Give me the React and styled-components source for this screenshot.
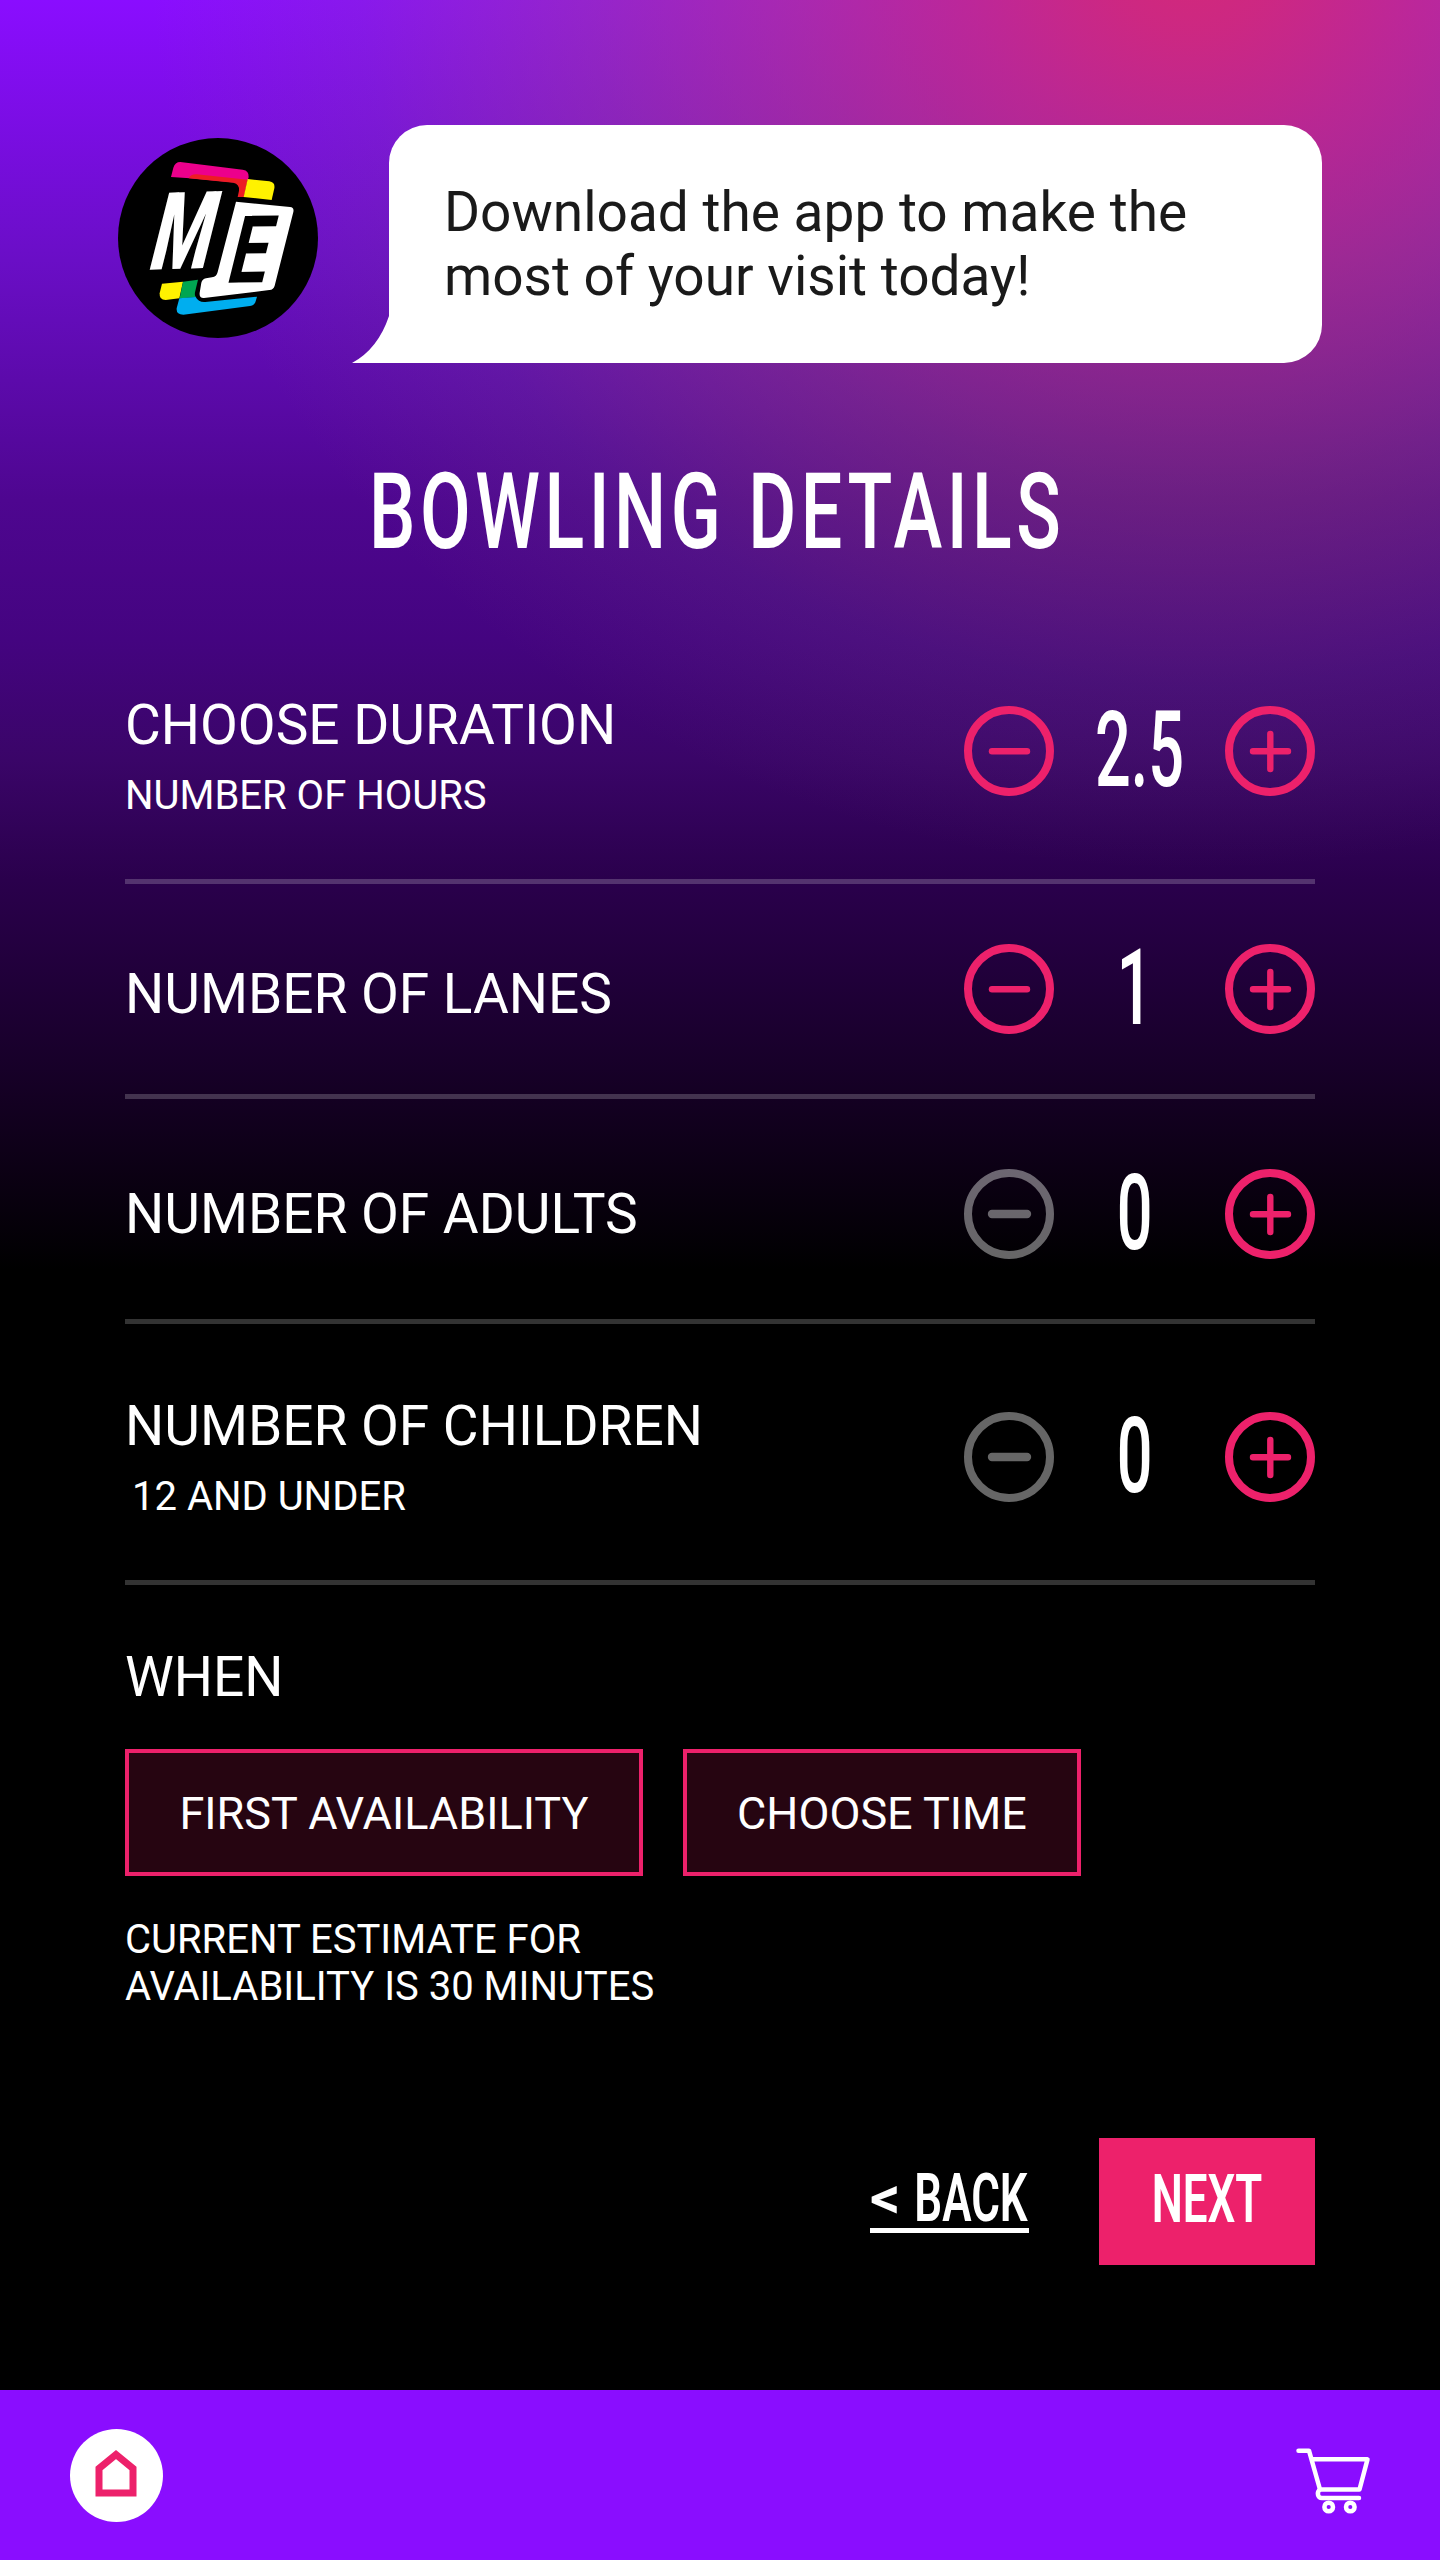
import React, { useState } from 'react'
import styled, { createGlobalStyle } from 'styled-components'

const PINK = '#ed216b'
const PURPLE = '#8a0dff'

const GlobalStyle = createGlobalStyle`
  * {
    box-sizing: border-box;
  }
  body {
    margin: 0;
    background: #000;
  }
  button {
    font: inherit;
    color: inherit;
    cursor: pointer;
  }
`

const Screen = styled.div`
  display: flex;
  flex-direction: column;
  width: 1440px;
  height: 2560px;
  color: #fff;
  font-family: Roboto, 'Liberation Sans', sans-serif;
  background:
    radial-gradient(
      ellipse 1040px 920px at 1190px -50px,
      rgb(212, 41, 120) 0,
      rgba(210, 42, 120, 0.92) 9%,
      rgba(206, 48, 118, 0.74) 22%,
      rgba(198, 66, 104, 0.52) 38%,
      rgba(172, 84, 100, 0.33) 58%,
      rgba(130, 96, 120, 0.14) 80%,
      rgba(100, 80, 120, 0) 100%
    ),
    linear-gradient(
      to bottom,
      #8a0dff 0,
      #6a0ec6 260px,
      #4e0690 500px,
      #440480 640px,
      #3a0568 760px,
      #2a004c 880px,
      #18002a 1060px,
      #0e0018 1150px,
      #000 1270px
    );
`

const Header = styled.header`
  display: flex;
  align-items: flex-start;
  padding: 125px 118px 0;
`

const LogoWrapper = styled.div`
  width: 200px;
  height: 200px;
  margin: 13px 71px 0 0;
  svg {
    display: block;
  }
`

const Bubble = styled.div`
  position: relative;
  width: 933px;
  height: 238px;
  padding: 55px 40px 0 55px;
  border-radius: 38px 38px 38px 0;
  background: #fff;
  color: #1a1a1a;
  font-size: 55px;
  line-height: 64px;
`

const BubbleTail = styled.svg`
  position: absolute;
  left: -37px;
  bottom: 0;
`

const Title = styled.h1`
  margin: 90px 0 0;
  padding-right: 8px;
  font-size: 105px;
  line-height: 120px;
  font-weight: 500;
  letter-spacing: 6.5px;
  text-align: center;
  white-space: nowrap;
  transform: scaleX(0.7);
`

const Form = styled.main`
  flex: 1;
  padding: 0 125px;
`

const Row = styled.section`
  display: flex;
  justify-content: space-between;
  height: ${props => props.$height}px;
  border-bottom: 5px solid rgba(255, 255, 255, 0.2);
`

const RowText = styled.div`
  padding-top: ${props => props.$top}px;
`

const Label = styled.h2`
  margin: 0;
  font-size: 55px;
  line-height: 64px;
  font-weight: 400;
`

const Note = styled.p`
  margin: 15px 0 0;
  padding-left: ${props => props.$indent || 0}px;
  font-size: 40px;
  line-height: 47px;
`

const Stepper = styled.div`
  display: flex;
  align-items: center;
  height: 90px;
  margin-top: ${props => props.$top}px;
`

const RoundButton = styled.button`
  padding: 0;
  border: 0;
  background: none;
  color: ${PINK};
  &:disabled {
    color: rgba(255, 255, 255, 0.4);
  }
  svg {
    display: block;
  }
`

const Value = styled.output`
  width: 171px;
  padding-right: ${props => (props.$whole ? 16 : 0)}px;
  font-size: 105px;
  line-height: 90px;
  font-weight: 500;
  text-align: center;
  white-space: nowrap;
  transform: scaleX(0.6);
`

const When = styled.section`
  padding-top: 60px;
`

const Choices = styled.div`
  display: flex;
  gap: 40px;
  margin-top: 40px;
`

const ChoiceButton = styled.button`
  width: ${props => props.$width}px;
  height: 127px;
  padding: 2px 0 0;
  border: 4px solid ${PINK};
  background: rgba(237, 33, 107, 0.16);
  font-size: 45px;
`

const Estimate = styled.p`
  margin: 40px 0 0;
  font-size: 40px;
  line-height: 47px;
`

const Actions = styled.div`
  display: flex;
  justify-content: flex-end;
  align-items: flex-start;
  gap: 70px;
  margin-top: 128px;
`

const BackLink = styled.a`
  display: flex;
  justify-content: space-between;
  width: 159px;
  height: 95px;
  padding-top: 23px;
  border-bottom: 5px solid #fff;
`

const Arrow = styled.span`
  font-size: 60px;
  line-height: 74px;
  font-weight: 600;
`

const NextButton = styled.button`
  display: flex;
  justify-content: center;
  align-items: center;
  width: 216px;
  height: 127px;
  padding: 0 0 4px;
  border: 0;
  background: ${PINK};
`

const Condensed = styled.span`
  display: flex;
  justify-content: center;
  width: 116px;
  font-size: 66px;
  line-height: 76px;
  font-weight: 600;
  white-space: nowrap;
  transform: scaleX(0.665);
`

const Footer = styled.footer`
  display: flex;
  justify-content: space-between;
  height: 170px;
  padding: 39px 69px 0 70px;
  background: ${PURPLE};
`

const HomeButton = styled.button`
  display: flex;
  justify-content: center;
  align-items: flex-start;
  width: 93px;
  height: 93px;
  padding: 21px 2px 0 0;
  border: 0;
  border-radius: 50%;
  background: #fff;
`

const CartButton = styled.button`
  display: flex;
  align-items: flex-start;
  height: 93px;
  padding: 18px 0 0;
  border: 0;
  background: none;
`

function Logo() {
  return (
    <LogoWrapper>
      <svg width="200" height="200" viewBox="54 54 600 600">
        <circle cx="354" cy="354" r="300" fill="#000" />
        <path d="M213 171 L220 143 Q225 126 241 126 L428 149 Q448 152 446 172 L443 180 L410 188 L270 175 Z" fill="#ec008c" />
        <path d="M266 175 Q272 162 290 163 L443 179 L432 231 H413 L417 212 Q419 192 400 188 Z" fill="#ed1c24" />
        <path d="M443 177 L508 184 Q526 187 523 205 L515 240 L431 231 Z" fill="#fff200" />
        <path d="M186 491 L249 485 L238 535 L197 540 Q177 540 179 520 Z" fill="#fff200" />
        <path d="M249 485 L294 479 L285 517 Q283 529 289 532 L239 535 Z" fill="#00a651" />
        <path d="M238 535 L287 531 Q296 548 316 546 L471 530 L467 544 Q464 556 450 558 L250 584 Q228 584 230 565 Z" fill="#00aeef" />
        <path d="M408 245 L570 261 Q583 262 580 276 L524 497 Q521 509 508 510 L312 534 Q297 535 299 518 L304 488 Q307 477 318 475 L336 472 Q350 470 353 456 Z" fill="#fff" />
        <text transform="matrix(2.08 -0.06 -0.82 3.25 138 449)" fontSize="100" fontWeight="900" fill="#fff">M</text>
        <text transform="matrix(2.12 -0.03 -0.7 2.82 372 488)" fontSize="100" fontWeight="700" fill="#000">E</text>
      </svg>
    </LogoWrapper>
  )
}

function StepIcon({ plus, muted }) {
  return (
    <svg width="90" height="90" viewBox="0 0 90 90" fill="none" stroke="currentColor">
      <circle cx="45" cy="45" r="41" strokeWidth="8" />
      <path
        d={muted ? 'M28 45 H63' : plus ? 'M28 45.3 H63 M45.3 28 V63' : 'M28 45.3 H63'}
        strokeWidth={muted ? 8.4 : 6.4}
        strokeLinecap="round"
      />
    </svg>
  )
}

function CounterRow({ height, top, stepperTop, label, note, noteIndent, start, step = 1, min = 0 }) {
  const [value, setValue] = useState(start)
  const atMin = value <= min
  return (
    <Row $height={height}>
      <RowText $top={top}>
        <Label>{label}</Label>
        {note && <Note $indent={noteIndent}>{note}</Note>}
      </RowText>
      <Stepper $top={stepperTop}>
        <RoundButton disabled={atMin} onClick={() => setValue(value - step)}>
          <StepIcon muted={atMin} />
        </RoundButton>
        <Value $whole={Number.isInteger(value)}>{value}</Value>
        <RoundButton onClick={() => setValue(value + step)}>
          <StepIcon plus />
        </RoundButton>
      </Stepper>
    </Row>
  )
}

export default function App() {
  return (
    <Screen>
      <GlobalStyle />
      <Header>
        <Logo />
        <Bubble>
          <BubbleTail width="38" height="47" viewBox="0 0 38 47">
            <path d="M37 0 Q26 33 0 47 H38 V0 Z" fill="#fff" />
          </BubbleTail>
          Download the app to make the<br />most of your visit today!
        </Bubble>
      </Header>
      <Title>BOWLING DETAILS</Title>
      <Form>
        <CounterRow height={311} top={120} stepperTop={133} label="CHOOSE DURATION" note="NUMBER OF HOURS" start={2.5} step={0.5} />
        <CounterRow height={215} top={78} stepperTop={60} label="NUMBER OF LANES" start={1} />
        <CounterRow height={225} top={83} stepperTop={70} label="NUMBER OF ADULTS" start={0} />
        <CounterRow height={261} top={70} stepperTop={88} label="NUMBER OF CHILDREN" note="12 AND UNDER" noteIndent={7} start={0} />
        <When>
          <Label>WHEN</Label>
          <Choices>
            <ChoiceButton $width={518}>FIRST AVAILABILITY</ChoiceButton>
            <ChoiceButton $width={398}>CHOOSE TIME</ChoiceButton>
          </Choices>
          <Estimate>CURRENT ESTIMATE FOR<br />AVAILABILITY IS 30 MINUTES</Estimate>
        </When>
        <Actions>
          <BackLink>
            <Arrow>&lt;</Arrow>
            <Condensed>BACK</Condensed>
          </BackLink>
          <NextButton>
            <Condensed>NEXT</Condensed>
          </NextButton>
        </Actions>
      </Form>
      <Footer>
        <HomeButton>
          <svg width="42" height="47" viewBox="0 0 42 47">
            <path d="M4 43 V18.500 L21 4.600 L38 18.500 V43 Z" fill="none" stroke={PINK} strokeWidth="7" />
          </svg>
        </HomeButton>
        <CartButton>
          <svg width="75" height="68" viewBox="0 0 75 68" fill="none" stroke="#fff" strokeWidth="4.500" strokeLinecap="round" strokeLinejoin="round">
            <path d="M2.500 3.700 H13 L24 42.500 H63.500 L71.500 12.300 H16" />
            <path d="M24 42.500 C20.500 45 21.500 51 26 51 H63" />
            <circle cx="32.700" cy="60" r="4.300" />
            <circle cx="54.300" cy="60" r="4.300" />
          </svg>
        </CartButton>
      </Footer>
    </Screen>
  )
}
